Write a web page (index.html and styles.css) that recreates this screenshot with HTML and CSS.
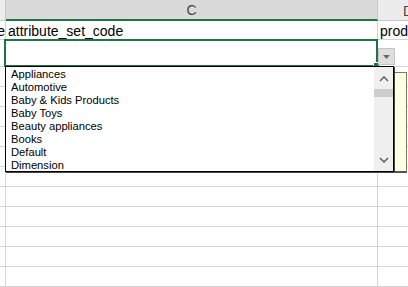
FILE: index.html
```html
<!DOCTYPE html>
<html>
<head>
<meta charset="utf-8">
<link rel="stylesheet" href="styles.css">
</head>
<body>
<div class="sheet">
  <div class="cell colb hdr"></div>
  <div class="cell colc hdr hdr-sel">C</div>
  <div class="cell cold hdr hdr-d">D</div>

  <div class="cell colb r1 cut"><span>type</span></div>
  <div class="cell colc r1 txt">attribute_set_code</div>
  <div class="cell cold r1 txt">product_type</div>

  <div class="cell colb"></div><div class="cell colc"></div><div class="cell cold"></div>
  <div class="cell colb"></div><div class="cell colc"></div><div class="cell cold"></div>
  <div class="cell colb"></div><div class="cell colc"></div><div class="cell cold"></div>
  <div class="cell colb"></div><div class="cell colc"></div><div class="cell cold"></div>
  <div class="cell colb"></div><div class="cell colc"></div><div class="cell cold"></div>
  <div class="cell colb"></div><div class="cell colc"></div><div class="cell cold"></div>
  <div class="cell colb"></div><div class="cell colc"></div><div class="cell cold"></div>
  <div class="cell colb"></div><div class="cell colc"></div><div class="cell cold"></div>
  <div class="cell colb"></div><div class="cell colc"></div><div class="cell cold"></div>
  <div class="cell colb"></div><div class="cell colc"></div><div class="cell cold"></div>
  <div class="cell colb"></div><div class="cell colc"></div><div class="cell cold"></div>
  <div class="cell colb"></div><div class="cell colc"></div><div class="cell cold"></div>

  <div class="active"><div class="handle"></div></div>
  <div class="ddbtn"><svg width="7" height="4" viewBox="0 0 7 4"><path d="M0 0H7L3.5 4Z" fill="#6a6a6a"/></svg></div>
  <div class="comment"></div>
  <div class="list">
    <ul class="items">
      <li>Appliances</li>
      <li>Automotive</li>
      <li>Baby &amp; Kids Products</li>
      <li>Baby Toys</li>
      <li>Beauty appliances</li>
      <li>Books</li>
      <li>Default</li>
      <li>Dimension</li>
    </ul>
    <div class="scroll">
      <svg class="up" width="10" height="6" viewBox="0 0 10 6"><path d="M1 5L5 1L9 5" fill="none" stroke="#5f5f5f" stroke-width="1.5"/></svg>
      <div class="thumb"></div>
      <svg class="down" width="10" height="6" viewBox="0 0 10 6"><path d="M1 1L5 5L9 1" fill="none" stroke="#5f5f5f" stroke-width="1.5"/></svg>
    </div>
  </div>
</div>
</body>
</html>
```

FILE: styles.css
```css
html, body {
  margin: 0;
  padding: 0;
  overflow: hidden;
  background: #fff;
}
.sheet {
  position: relative;
  display: grid;
  grid-template-columns: 6px 372px 30px;
  grid-template-rows: 21px 19px 27px repeat(11, 20px);
  width: 408px;
  font-family: "Liberation Sans", Arial, sans-serif;
  font-size: 14px;
  color: #000;
}
.cell {
  box-sizing: border-box;
  border-right: 1px solid #d4d4d4;
  border-bottom: 1px solid #d4d4d4;
  overflow: hidden;
  white-space: nowrap;
}
.cold { border-right: none; }
.hdr {
  background: #ececec;
  border-right-color: #c8c8c8;
  border-bottom: 1px solid #c8c8c8;
  display: flex;
  align-items: center;
  justify-content: center;
  color: #444;
  line-height: 16px;
  padding-top: 1px;
}
.hdr-sel {
  background: #dadada;
  border-bottom: 2px solid #217346;
}
.hdr-d {
  justify-content: flex-start;
  padding-left: 25px;
}
.txt {
  display: flex;
  align-items: flex-end;
  line-height: 15px;
  padding-left: 2px;
}
.cut {
  display: flex;
  justify-content: flex-end;
  align-items: flex-end;
  line-height: 15px;
}
.cut span { flex: none; }

.active {
  position: absolute;
  left: 4px;
  top: 39px;
  width: 374px;
  height: 28px;
  box-sizing: border-box;
  border: 2px solid #217346;
}
.handle {
  position: absolute;
  right: -4px;
  bottom: -4px;
  width: 5px;
  height: 5px;
  background: #217346;
  border: 1px solid #fff;
}
.ddbtn {
  position: absolute;
  left: 378px;
  top: 48px;
  width: 17px;
  height: 17px;
  box-sizing: border-box;
  background: #dedede;
  border: 1px solid #c4c4c4;
  display: flex;
  align-items: center;
  justify-content: center;
}
.comment {
  position: absolute;
  left: 192px;
  top: 72px;
  width: 215px;
  height: 101px;
  box-sizing: border-box;
  background: #ffffe1;
  border: 1px solid #7a7a6a;
  border-bottom: 2px solid #555;
}
.list {
  position: absolute;
  left: 5px;
  top: 66px;
  width: 389px;
  height: 106px;
  box-sizing: border-box;
  background: #fff;
  border: 1px solid #000;
  box-shadow: 1px 1px 0 #444;
  font-size: 11.2px;
  overflow: hidden;
}
.items {
  list-style: none;
  margin: 0;
  padding: 1px 0 0 5px;
}
.items li {
  line-height: 13px;
  height: 13px;
  white-space: nowrap;
}
.scroll {
  position: absolute;
  right: 0;
  top: 0;
  bottom: 0;
  width: 19px;
  background: #f0f0f0;
  display: flex;
  flex-direction: column;
  align-items: center;
}
.scroll .up { margin-top: 9px; }
.thumb {
  align-self: stretch;
  height: 8px;
  margin-top: 7px;
  background: #cdcdcd;
}
.scroll .down { margin-top: auto; margin-bottom: 8px; }
```
